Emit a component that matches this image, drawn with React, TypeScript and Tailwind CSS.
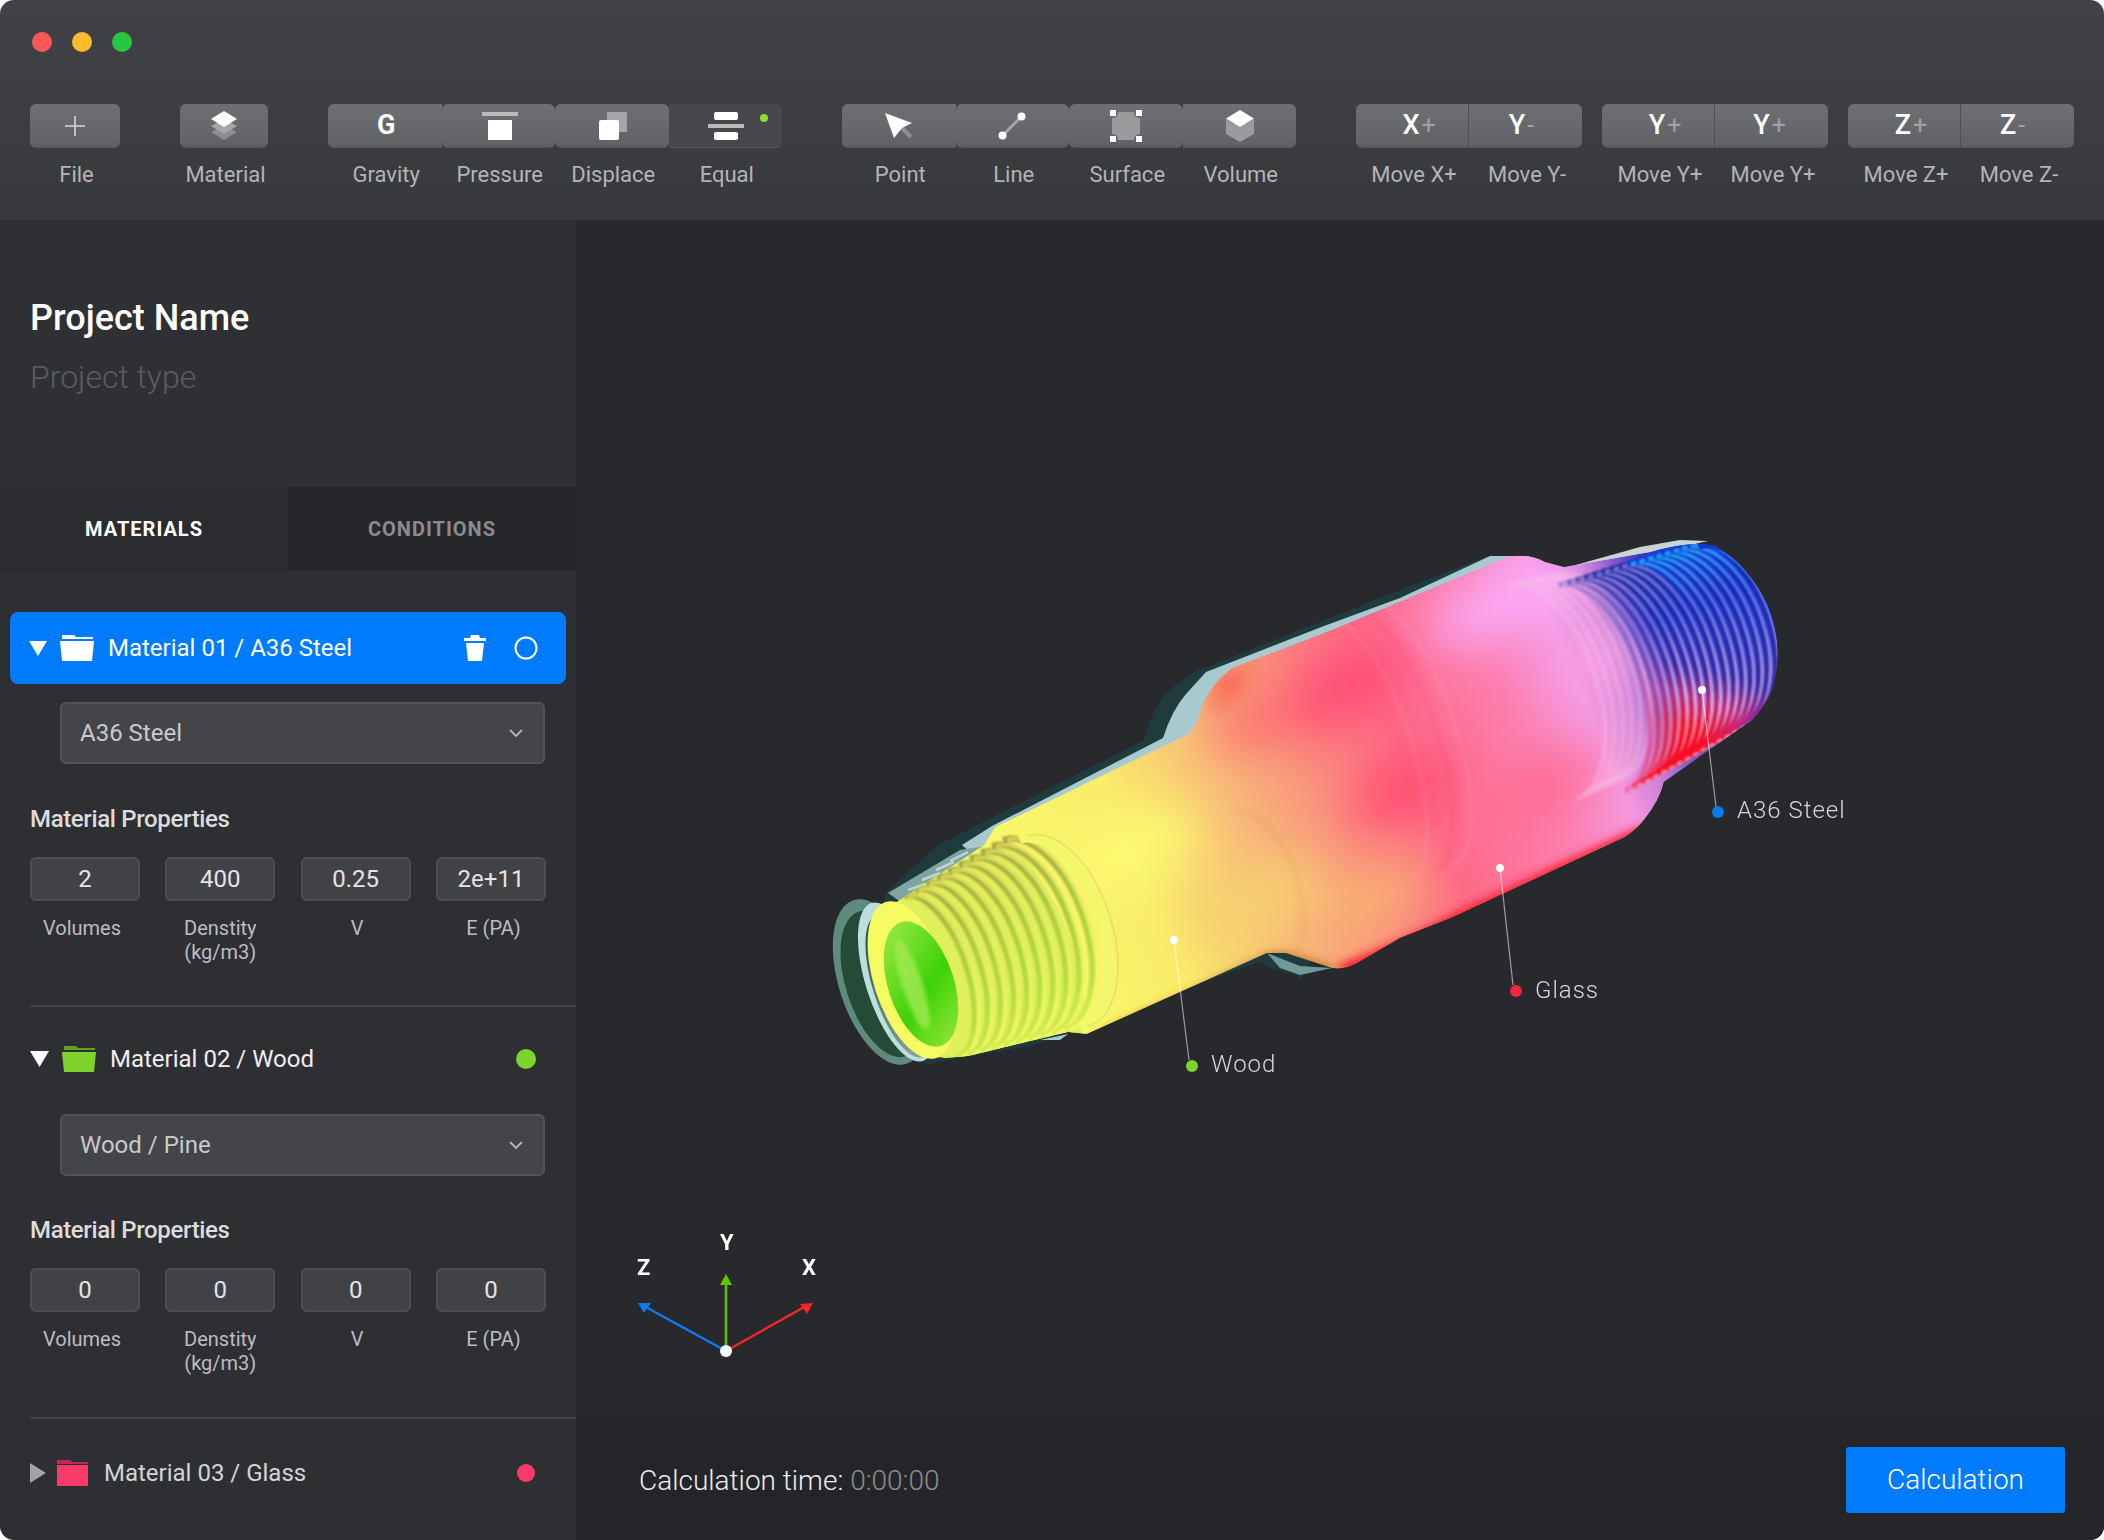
import React from "react";

const FONT = { fontFamily: "Roboto, 'Liberation Sans', sans-serif" };

function rings(count: number, a: number[], b: number[]) {
  // a and b are [cx, cy, rx, ry] of the first and last thread ring
  return Array.from({ length: count }, (_, i) => {
    const t = i / (count - 1);
    return a.map((v, k) => v + (b[k] - v) * t);
  });
}

function Arc({
  r,
  stroke,
  width,
  shift = 0,
  opacity = 1,
}: {
  r: number[];
  stroke: string;
  width: number;
  shift?: number;
  opacity?: number;
}) {
  return (
    <path
      d={`M0 ${-r[3]} A${r[2]} ${r[3]} 0 0 1 0 ${r[3]}`}
      transform={`translate(${r[0] + shift} ${r[1]}) rotate(-18)`}
      fill="none"
      stroke={stroke}
      strokeWidth={width}
      opacity={opacity}
    />
  );
}

const BODY =
  "M892 905 L984 845 L995 827 L1186 735 Q1196 728 1200 712 Q1208 686 1232 668 L1324 633 L1507 557 Q1530 553 1545 562 L1564 567 L1650 552 Q1690 540 1716 546 Q1750 566 1770 610 Q1784 650 1772 690 Q1764 708 1752 720 L1664 782 Q1660 800 1644 820 Q1636 830 1625 837 L1453 917 L1400 938 L1357 963 Q1345 970 1332 968 L1286 953 L1267 953 L1087 1034 L1068 1032 L1026 1042 L968 1056 L945 1058 Q905 1058 884 990 Q868 935 892 905 Z";

function Pipe() {
  const left = rings(10, [930, 977, 38, 85], [1034, 935, 52, 100]);
  const right = rings(16, [1592, 688, 50, 108], [1716, 635, 54, 94]);
  return (
    <svg className="absolute left-0 top-0" width="1528" height="1197" viewBox="576 220 1528 1197">
      <defs>
        <linearGradient id="axis" gradientUnits="userSpaceOnUse" x1="880" y1="1010" x2="1780" y2="640">
          <stop offset="0" stopColor="#c6f53e" />
          <stop offset="0.1" stopColor="#eef75f" />
          <stop offset="0.17" stopColor="#f9f86a" />
          <stop offset="0.3" stopColor="#f9ec6a" />
          <stop offset="0.42" stopColor="#f8b87a" />
          <stop offset="0.52" stopColor="#fa8a7e" />
          <stop offset="0.6" stopColor="#fe6a88" />
          <stop offset="0.72" stopColor="#fc80b0" />
          <stop offset="0.79" stopColor="#f59ae0" />
          <stop offset="0.83" stopColor="#d080d8" />
          <stop offset="0.9" stopColor="#3a38c0" />
          <stop offset="1" stopColor="#0a3ef0" />
        </linearGradient>
        <linearGradient id="hole" gradientUnits="userSpaceOnUse" x1="890" y1="940" x2="960" y2="1030">
          <stop offset="0" stopColor="#8ee63c" />
          <stop offset="0.55" stopColor="#3cd206" />
          <stop offset="1" stopColor="#8ee436" />
        </linearGradient>
        <linearGradient id="ghost" gradientUnits="userSpaceOnUse" x1="880" y1="930" x2="930" y2="1050">
          <stop offset="0" stopColor="#2d5a48" />
          <stop offset="1" stopColor="#8aa89e" />
        </linearGradient>
        <linearGradient id="oliveDark" gradientUnits="userSpaceOnUse" x1="0" y1="-100" x2="0" y2="100">
          <stop offset="0" stopColor="#a8a03c" />
          <stop offset="0.4" stopColor="#aecb3c" />
          <stop offset="0.8" stopColor="#bce040" />
          <stop offset="1" stopColor="#d8ec50" />
        </linearGradient>
        <linearGradient id="oliveLight" gradientUnits="userSpaceOnUse" x1="0" y1="-100" x2="0" y2="100">
          <stop offset="0" stopColor="#dcd860" />
          <stop offset="0.5" stopColor="#e0f260" />
          <stop offset="1" stopColor="#f6fb6c" />
        </linearGradient>
        {/* rings nearer the tip stay blue further down before turning red */}
        {right.map((_, i) => {
          const t = i / (right.length - 1);
          const b = 0.42 + 0.42 * t;
          return (
            <React.Fragment key={i}>
              <linearGradient id={`td${i}`} gradientUnits="userSpaceOnUse" x1="0" y1="-104" x2="0" y2="104">
                <stop offset="0" stopColor={t < 0.5 ? "#2a2a9c" : "#0c3ee0"} />
                <stop offset="0.3" stopColor="#1c28b0" />
                <stop offset={b} stopColor="#3a2ca8" />
                <stop offset={b + 0.15} stopColor="#c02c88" />
                <stop offset={b + 0.3} stopColor="#f81028" />
              </linearGradient>
              <linearGradient id={`tl${i}`} gradientUnits="userSpaceOnUse" x1="0" y1="-104" x2="0" y2="104">
                <stop offset="0" stopColor={t < 0.5 ? "#7a80e0" : "#20b8fc"} />
                <stop offset="0.3" stopColor="#5a78ec" />
                <stop offset={b} stopColor="#b8a0e8" />
                <stop offset={b + 0.15} stopColor="#f6c0e4" />
                <stop offset={b + 0.3} stopColor="#ff8898" />
              </linearGradient>
            </React.Fragment>
          );
        })}
        <clipPath id="bodyClip">
          <path d={BODY} />
        </clipPath>
        <filter id="blur30" x="-50%" y="-50%" width="200%" height="200%">
          <feGaussianBlur stdDeviation="24" />
        </filter>
        <filter id="blur10" x="-50%" y="-50%" width="200%" height="200%">
          <feGaussianBlur stdDeviation="10" />
        </filter>
        <filter id="blur5" x="-50%" y="-50%" width="200%" height="200%">
          <feGaussianBlur stdDeviation="4" />
        </filter>
        <filter id="blur3" x="-20%" y="-20%" width="140%" height="140%">
          <feGaussianBlur stdDeviation="2" />
        </filter>
        <filter id="blur1" x="-10%" y="-10%" width="120%" height="120%">
          <feGaussianBlur stdDeviation="0.9" />
        </filter>
      </defs>

      {/* ghost shell behind the colored mesh */}
      <path
        d="M885 893 L938 845 L1144 740 Q1155 700 1172 688 L1194 672 L1400 590 L1487 556 L1520 560 L1300 980 L1294 973 Q1270 970 1259 962 L1030 1046 L925 1064 L870 1010 Z"
        fill="#1f3b3d"
      />
      <path
        d="M962 845 L992 826 L1163 738 Q1172 710 1186 694 L1206 672 L1324 626 L1400 598 L1490 556 L1530 556 L1300 700 L1000 880 Z"
        fill="#a8cace"
      />
      <path d="M1572 566 L1640 547 L1680 540 L1708 541 L1650 554 L1580 572 Z" fill="#c9d4d4" />
      <path d="M1267 953 L1300 966 L1332 968 L1300 975 L1280 968 Z" fill="#6f9a9c" />
      <path d="M1040 1040 L1068 1034 L1060 1040 Z" fill="#a8cace" />
      <g transform="rotate(-18 880 982)">
        <ellipse cx="880" cy="982" rx="41" ry="86" fill="#5f8a7e" />
      </g>
      <g transform="rotate(-18 882 984)">
        <ellipse cx="882" cy="984" rx="36" ry="76" fill="#234b37" />
      </g>
      <g transform="rotate(-18 897 982)">
        <ellipse cx="897" cy="982" rx="31" ry="83" fill="#bcdedd" />
      </g>
      <g transform="rotate(-18 900 986)">
        <ellipse cx="900" cy="986" rx="27" ry="75" fill="url(#ghost)" />
      </g>
      <path d="M888 893 L960 850 L985 846 L905 905 Z" fill="#7fa5a2" />
      <g stroke="#dbe8e6" strokeWidth="2.5" opacity="0.7">
        <line x1="908" y1="890" x2="925" y2="884" />
        <line x1="922" y1="880" x2="940" y2="873" />
        <line x1="936" y1="870" x2="954" y2="862" />
        <line x1="950" y1="861" x2="968" y2="852" />
      </g>

      {/* colored mesh */}
      <g clipPath="url(#bodyClip)">
        <path d={BODY} fill="url(#axis)" />
        <g filter="url(#blur30)">
          <ellipse cx="1338" cy="690" rx="80" ry="36" fill="#ff4f78" transform="rotate(-25 1338 690)" />
          <ellipse cx="1405" cy="790" rx="56" ry="30" fill="#ff5070" transform="rotate(-25 1405 790)" />
          <ellipse cx="1510" cy="600" rx="90" ry="30" fill="#fbaaf8" transform="rotate(-25 1510 600)" />
          <ellipse cx="1590" cy="660" rx="40" ry="40" fill="#f79ce4" />
          <ellipse cx="1540" cy="790" rx="70" ry="24" fill="#ff6a90" transform="rotate(-25 1540 790)" />
          <ellipse cx="1260" cy="900" rx="70" ry="30" fill="#f6d070" transform="rotate(-25 1260 900)" />
          <ellipse cx="1370" cy="900" rx="60" ry="26" fill="#f8b472" transform="rotate(-25 1370 900)" />
          <ellipse cx="1130" cy="850" rx="70" ry="34" fill="#fbfb72" transform="rotate(-25 1130 850)" />
          <ellipse cx="1260" cy="720" rx="50" ry="24" fill="#fb7070" transform="rotate(-25 1260 720)" />
        </g>
        <g filter="url(#blur10)">
          <path d="M1215 675 L1255 660 L1245 690 L1210 715 Z" fill="#f86a58" />
        </g>
        <g filter="url(#blur5)">
          <path d="M1330 968 L1400 940 L1456 912 L1640 826 L1660 838 L1470 925 L1360 975 Z" fill="#fa2432" />
          <path d="M1087 1036 L1183 994 L1270 952 L1290 952 L1340 968 L1300 985 L1190 1005 Z" fill="#c4822a" />
        </g>
        <g filter="url(#blur3)">
          <Arc r={[1258, 888, 40, 80]} stroke="#e6a862" width={6} opacity={0.32} />
          <Arc r={[1368, 750, 44, 136]} stroke="#ffd0d8" width={3} opacity={0.16} />
          <Arc r={[1394, 740, 44, 136]} stroke="#f03c60" width={4} opacity={0.18} />
          <Arc r={[1412, 735, 44, 136]} stroke="#ffd0e0" width={3} opacity={0.16} />
        </g>

        {/* near thread: olive grooves over a yellow-green base */}
        <path d="M880 900 L1010 838 Q1090 930 1085 1040 L945 1060 Z" fill="#dff05c" />
        <g filter="url(#blur1)">
          {left.map((r, i) => (
            <g key={i}>
              <Arc r={r} stroke="url(#oliveDark)" width={6} />
              <Arc r={r} stroke="url(#oliveLight)" width={3} shift={4} />
            </g>
          ))}
        </g>
        <Arc r={[1050, 933, 54, 100]} stroke="#f3f86a" width={12} />
        <Arc r={[1058, 931, 54, 100]} stroke="#d6c85a" width={2} opacity={0.4} />

        {/* pale rings where the body gives way to the far thread */}
        <g filter="url(#blur3)">
          {[0, 1, 2, 3, 4, 5].map((i) => (
            <Arc key={i} r={[1542 + i * 9, 692 - i * 3, 56, 112 - i]} stroke="#f8c0ea" width={3} opacity={0.7} />
          ))}
        </g>

        {/* far thread: navy grooves that fade to pink and red toward the lower edge */}
        <g filter="url(#blur1)">
          {right.map((r, i) => (
            <g key={i} opacity={Math.min(1, 0.3 + i * 0.18)}>
              <Arc r={r} stroke={`url(#td${i})`} width={5.5} />
              <Arc r={r} stroke={`url(#tl${i})`} width={2.5} shift={4} />
            </g>
          ))}
        </g>
        <Arc r={[1726, 631, 54, 92]} stroke="url(#td15)" width={13} />
      </g>

      {/* open end */}
      <g transform="rotate(-18 911 980)">
        <ellipse cx="911" cy="980" rx="37" ry="82" fill="#f6fb62" />
      </g>
      <g transform="rotate(-18 921 984)">
        <ellipse cx="921" cy="984" rx="33" ry="65" fill="url(#hole)" />
      </g>
      <g transform="rotate(-18 912 984)" filter="url(#blur3)">
        <ellipse cx="912" cy="984" rx="10" ry="48" fill="#a4ea54" opacity="0.8" />
      </g>

      {/* leaders */}
      <g stroke="#ffffff" strokeOpacity="0.55" strokeWidth="1.2">
        <line x1="1702" y1="690" x2="1716" y2="807" />
        <line x1="1500" y1="868" x2="1513" y2="985" />
        <line x1="1174" y1="940" x2="1189" y2="1060" />
      </g>
      <circle cx="1702" cy="690" r="4" fill="#fff" />
      <circle cx="1500" cy="868" r="4" fill="#fff" />
      <circle cx="1174" cy="940" r="4" fill="#fff" />
      <circle cx="1718" cy="812" r="6" fill="#0a7bf0" />
      <circle cx="1516" cy="991" r="6" fill="#f5263f" />
      <circle cx="1192" cy="1066" r="6" fill="#7ed32c" />

      {/* axes */}
      <g strokeWidth="2.5" fill="none">
        <line x1="726" y1="1351" x2="726" y2="1282" stroke="#5fc400" />
        <line x1="726" y1="1351" x2="644" y2="1306" stroke="#0a7bf0" />
        <line x1="726" y1="1351" x2="806" y2="1306" stroke="#f5262a" />
      </g>
      <path d="M726 1274 L720 1285 L732 1285 Z" fill="#5fc400" />
      <path d="M638 1303 L651 1303 L644 1313 Z" fill="#0a7bf0" />
      <path d="M813 1303 L800 1304 L807 1314 Z" fill="#f5262a" />
      <circle cx="726" cy="1351" r="6" fill="#fff" />
    </svg>
  );
}

function ToolButton({ label, className = "", children }: { label: string; className?: string; children: React.ReactNode }) {
  return (
    <div className="flex flex-col items-center">
      <div className={`flex h-[44px] w-full items-center justify-center border-b border-[#55565a] ${className}`}>
        {children}
      </div>
      <span className="ml-[3px] mt-[15px] whitespace-nowrap text-[22px] leading-[24px] text-[#b3b4b7]">{label}</span>
    </div>
  );
}

const btn = "bg-gradient-to-b from-[#6f7074] to-[#606165]";

function AxisGlyph({ a, b }: { a: string; b: string }) {
  return (
    <span className="flex items-center leading-none">
      <span className="text-[27px] font-medium text-white">{a}</span>
      <span className="ml-[2px] text-[25px] text-[#a0a1a3]">{b}</span>
    </span>
  );
}

function Toolbar() {
  return (
    <header className="h-[220px] shrink-0 bg-gradient-to-b from-[#414246] to-[#38393d] pl-[30px]">
      <div className="ml-[2px] flex gap-[20px] pt-[32px]">
        <span className="h-[20px] w-[20px] rounded-full bg-[#fc5753]" />
        <span className="h-[20px] w-[20px] rounded-full bg-[#fdbc2d]" />
        <span className="h-[20px] w-[20px] rounded-full bg-[#27c83f]" />
      </div>
      <div className="mt-[52px] flex">
        <div className="w-[90px]">
          <ToolButton label="File" className={`${btn} rounded-[6px]`}>
            <svg width="24" height="24" viewBox="0 0 24 24">
              <path d="M12 2V22M2 12H22" stroke="#d6d6d8" strokeWidth="1.6" />
            </svg>
          </ToolButton>
        </div>
        <div className="ml-[60px] w-[88px]">
          <ToolButton label="Material" className={`${btn} rounded-[6px]`}>
            <svg width="28" height="30" viewBox="0 0 28 30">
              <path d="M14 14 L27 21 L14 29 L1 21 Z" fill="#8b8c8f" />
              <path d="M14 8 L27 15 L14 23 L1 15 Z" fill="#a5a6a8" />
              <path d="M14 0 L27 8 L14 16 L1 8 Z" fill="#ffffff" />
            </svg>
          </ToolButton>
        </div>

        <div className="ml-[60px] grid w-[454px] grid-cols-4">
          <ToolButton label="Gravity" className={`${btn} rounded-l-[6px] pl-[3px]`}>
            <span className="text-[27px] font-bold leading-none text-white">G</span>
          </ToolButton>
          <ToolButton label="Pressure" className={`${btn} rounded-[6px] pl-[3px]`}>
            <svg width="36" height="28" viewBox="0 0 36 28">
              <rect width="36" height="4" fill="#b9babc" />
              <rect x="6" y="8" width="24" height="20" fill="#fff" />
            </svg>
          </ToolButton>
          <ToolButton label="Displace" className={`${btn} rounded-[6px] pl-[3px]`}>
            <svg width="28" height="28" viewBox="0 0 28 28">
              <rect x="8" width="20" height="20" rx="1" fill="#a4a5a8" />
              <rect y="8" width="20" height="20" rx="2" fill="#fff" />
            </svg>
          </ToolButton>
          <ToolButton label="Equal" className="relative rounded-r-[6px] bg-[#46474b] pl-[2px]">
            <svg width="36" height="28" viewBox="0 0 36 28">
              <rect x="6" width="24" height="8" rx="2" fill="#fff" />
              <rect y="12" width="36" height="4" fill="#b9babc" />
              <rect x="6" y="20" width="24" height="8" rx="2" fill="#fff" />
            </svg>
            <span className="absolute right-[14px] top-[10px] h-[8px] w-[8px] rounded-full bg-[#8ee12a]" />
          </ToolButton>
        </div>

        <div className="ml-[60px] grid w-[454px] grid-cols-4">
          <ToolButton label="Point" className={`${btn} rounded-l-[6px]`}>
            <svg width="30" height="28" viewBox="0 0 30 28">
              <path d="M18 16 L27 25" stroke="#8e8f92" strokeWidth="4" />
              <path d="M1 1 L28 11 L18 16 L10 26 Z" fill="#fff" />
            </svg>
          </ToolButton>
          <ToolButton label="Line" className={`${btn} rounded-[6px]`}>
            <svg width="28" height="28" viewBox="0 0 28 28">
              <line x1="4.5" y1="23.5" x2="23.5" y2="4.5" stroke="#a4a5a8" strokeWidth="3" />
              <circle cx="4.5" cy="23.5" r="4" fill="#fff" />
              <circle cx="23.5" cy="4.5" r="4" fill="#fff" />
            </svg>
          </ToolButton>
          <ToolButton label="Surface" className={`${btn} rounded-[6px]`}>
            <svg width="32" height="32" viewBox="0 0 32 32">
              <path d="M8 2 H24 Q24 8 30 8 V24 Q24 24 24 30 H8 Q8 24 2 24 V8 Q8 8 8 2 Z" fill="#9a9b9d" />
              <g fill="#fff">
                <rect width="6" height="6" />
                <rect x="26" width="6" height="6" />
                <rect y="26" width="6" height="6" />
                <rect x="26" y="26" width="6" height="6" />
              </g>
            </svg>
          </ToolButton>
          <ToolButton label="Volume" className={`${btn} rounded-r-[6px] pl-[2px]`}>
            <svg width="28" height="32" viewBox="0 0 28 32">
              <path d="M0 9 L14 17 L28 9 V24 L14 32 L0 24 Z" fill="#9a9b9d" />
              <path d="M14 0 L28 8.5 L14 17 L0 8.5 Z" fill="#fff" />
            </svg>
          </ToolButton>
        </div>

        <div className="ml-[60px] grid w-[226px] grid-cols-2">
          <ToolButton label="Move X+" className={`${btn} rounded-l-[6px] border-r border-r-[#4e4f53] pl-[14px]`}>
            <AxisGlyph a="X" b="+" />
          </ToolButton>
          <ToolButton label="Move Y-" className={`${btn} rounded-r-[6px] pr-[8px]`}>
            <AxisGlyph a="Y" b="-" />
          </ToolButton>
        </div>
        <div className="ml-[20px] grid w-[226px] grid-cols-2">
          <ToolButton label="Move Y+" className={`${btn} rounded-l-[6px] border-r border-r-[#4e4f53] pl-[14px]`}>
            <AxisGlyph a="Y" b="+" />
          </ToolButton>
          <ToolButton label="Move Y+" className={`${btn} rounded-r-[6px] pr-[4px]`}>
            <AxisGlyph a="Y" b="+" />
          </ToolButton>
        </div>
        <div className="ml-[20px] grid w-[226px] grid-cols-2">
          <ToolButton label="Move Z+" className={`${btn} rounded-l-[6px] border-r border-r-[#4e4f53] pl-[14px]`}>
            <AxisGlyph a="Z" b="+" />
          </ToolButton>
          <ToolButton label="Move Z-" className={`${btn} rounded-r-[6px] pr-[10px]`}>
            <AxisGlyph a="Z" b="-" />
          </ToolButton>
        </div>
      </div>
    </header>
  );
}

function Folder({ color, tab }: { color: string; tab: string }) {
  return (
    <svg width="34" height="26" viewBox="0 0 34 26" className="shrink-0">
      <path d="M2 0 H14 L16 2 H33 V4 H2 Z" fill={tab} />
      <path d="M0 6 H34 L32 26 H2 Z" fill={color} />
    </svg>
  );
}

function Properties({ values }: { values: string[] }) {
  const labels = [
    { lines: ["Volumes"], cls: "pr-[6px]" },
    { lines: ["Denstity", "(kg/m3)"], cls: "" },
    { lines: ["V"], cls: "pl-[3px]" },
    { lines: ["E (PA)"], cls: "pl-[5px]" },
  ];
  return (
    <div>
      <div className="px-[30px] text-[24px] font-medium leading-[28px] tracking-[-0.35px] text-[#dcdcde]">
        Material Properties
      </div>
      <div className="mt-[24px] flex w-[546px] justify-between pl-[30px]">
        {values.map((v, i) => (
          <div key={i} className="w-[110px]">
            <div className="flex h-[44px] items-center justify-center rounded-[6px] border-2 border-[#4d4e52] bg-[#414246] text-[24px] text-[#e4e4e6]">
              {v}
            </div>
            <div className={`mt-[15px] text-center text-[20px] leading-[24px] text-[#bcbdc0] ${labels[i].cls}`}>
              {labels[i].lines.map((l) => (
                <div key={l}>{l}</div>
              ))}
            </div>
          </div>
        ))}
      </div>
    </div>
  );
}

function Select({ value }: { value: string }) {
  return (
    <div className="ml-[60px] flex h-[62px] w-[485px] items-center justify-between rounded-[6px] border-2 border-[#525357] bg-[#444549] pl-[18px] pr-[20px] text-[24px] text-[#c9c9cc]">
      {value}
      <svg width="14" height="9" viewBox="0 0 14 9">
        <path d="M1 1 L7 7 L13 1" fill="none" stroke="#b5b6b8" strokeWidth="1.8" />
      </svg>
    </div>
  );
}

function Sidebar() {
  return (
    <aside className="flex w-[576px] shrink-0 flex-col bg-[#2e2f33]">
      <div className="h-[267px] bg-[#2f3034] pl-[30px] pt-[76px]">
        <div className="text-[36px] font-medium leading-[44px] text-white">Project Name</div>
        <div className="mt-[17px] text-[32px] font-light leading-[40px] text-[#5b5c60]">Project type</div>
      </div>
      <div className="flex h-[84px] bg-[#26272a] text-[20px] font-bold tracking-[1px]">
        <div className="flex w-[288px] items-center justify-center bg-[#2b2c30] text-white">MATERIALS</div>
        <div className="flex flex-1 items-center justify-center text-[#8a8b8e]">CONDITIONS</div>
      </div>

      <div className="mx-[10px] mt-[41px] flex h-[72px] w-[556px] shrink-0 items-center rounded-[8px] bg-[#007bfb] pl-[19px] text-[24px] text-white">
        <svg width="18" height="15" viewBox="0 0 18 15" className="shrink-0">
          <path d="M0 0 H18 L9 15 Z" fill="#fff" />
        </svg>
        <div className="ml-[13px]">
          <Folder color="#fff" tab="#fff" />
        </div>
        <span className="ml-[14px]">Material 01 / A36 Steel</span>
        <svg width="22" height="26" viewBox="0 0 22 26" className="ml-auto shrink-0">
          <path d="M7 0 H15 L16 3 H22 V6 H0 V3 H6 Z M2 8 H20 L18 26 H4 Z" fill="#fff" />
        </svg>
        <svg width="24" height="24" viewBox="0 0 24 24" className="ml-[28px] mr-[28px] shrink-0">
          <circle cx="12" cy="12" r="10.5" fill="none" stroke="#fff" strokeWidth="2" />
        </svg>
      </div>
      <div className="mt-[18px]">
        <Select value="A36 Steel" />
      </div>
      <div className="mt-[41px]">
        <Properties values={["2", "400", "0.25", "2e+11"]} />
      </div>
      <div className="ml-[30px] mt-[41px] h-[2px] shrink-0 bg-[#414246]" />

      <div className="mt-[38px] flex h-[28px] shrink-0 items-center pl-[30px] text-[24px] text-[#eeeeef]">
        <svg width="19" height="16" viewBox="0 0 19 16" className="shrink-0">
          <path d="M0 0 H19 L9.5 16 Z" fill="#fff" />
        </svg>
        <div className="ml-[13px]">
          <Folder color="#7ed32c" tab="#5da61c" />
        </div>
        <span className="ml-[14px]">Material 02 / Wood</span>
        <span className="ml-auto mr-[40px] h-[20px] w-[20px] rounded-full bg-[#7ed32c]" />
      </div>
      <div className="mt-[41px]">
        <Select value="Wood / Pine" />
      </div>
      <div className="mt-[40px]">
        <Properties values={["0", "0", "0", "0"]} />
      </div>
      <div className="ml-[30px] mt-[42px] h-[2px] shrink-0 bg-[#414246]" />

      <div className="mt-[40px] flex h-[28px] shrink-0 items-center pl-[30px] text-[24px] text-[#d4d4d6]">
        <svg width="16" height="20" viewBox="0 0 16 20" className="shrink-0">
          <path d="M0 0 L16 10 L0 20 Z" fill="#a3a4a6" />
        </svg>
        <div className="ml-[11px] w-[31px]">
          <svg width="31" height="26" viewBox="0 0 31 26">
            <path d="M0 0 H13 L15 2 H31 V4 H0 Z" fill="#c22a55" />
            <path d="M0 5 H31 V26 H0 Z" fill="#fb3a6c" />
          </svg>
        </div>
        <span className="ml-[16px]">Material 03 / Glass</span>
        <span className="ml-auto mr-[41px] h-[18px] w-[18px] rounded-full bg-[#fb3a6c]" />
      </div>
    </aside>
  );
}

function Label({ className, children }: { className: string; children: React.ReactNode }) {
  return (
    <span className={`absolute text-[24px] font-light leading-[28px] tracking-[1px] text-[#d6d6d8] ${className}`}>
      {children}
    </span>
  );
}

export default function App() {
  return (
    <div className="h-[1540px] w-[2104px] overflow-hidden bg-white" style={FONT}>
      <div className="flex h-full flex-col overflow-hidden rounded-[14px]">
        <Toolbar />
        <div className="flex min-h-0 flex-1">
          <Sidebar />
          <main className="flex flex-1 flex-col bg-[#28292d]">
            <div className="relative flex-1">
              <Pipe />
              <Label className="left-[1161px] top-[576px]">A36 Steel</Label>
              <Label className="left-[959px] top-[756px]">Glass</Label>
              <Label className="left-[635px] top-[830px]">Wood</Label>
              <span className="absolute left-[144px] top-[1012px] text-[22px] font-bold leading-none text-white">Y</span>
              <span className="absolute left-[61px] top-[1037px] text-[22px] font-bold leading-none text-white">Z</span>
              <span className="absolute left-[226px] top-[1037px] text-[22px] font-bold leading-none text-white">X</span>
            </div>
            <div className="flex h-[123px] items-center justify-between bg-[#242529] pl-[63px] pr-[39px]">
              <div className="mt-[4px] text-[28px] font-light text-[#eeeeef]">
                Calculation time: <span className="text-[#8c8d90]">0:00:00</span>
              </div>
              <div className="mt-[2px] flex h-[66px] w-[219px] items-center justify-center rounded-[3px] bg-[#007bfb] text-[28px] font-light text-white">
                Calculation
              </div>
            </div>
          </main>
        </div>
      </div>
    </div>
  );
}
